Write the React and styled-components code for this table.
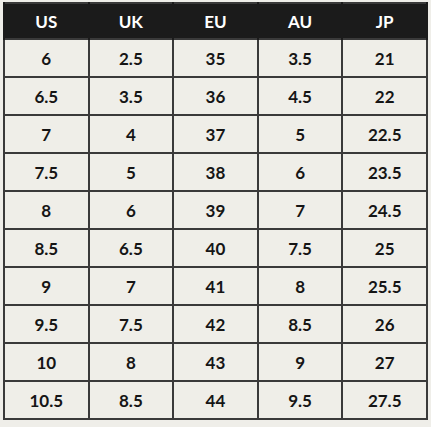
import React from "react";
import styled, { createGlobalStyle } from "styled-components";

const GlobalStyle = createGlobalStyle`
    html, body {
        margin: 0;
        padding: 0;
        background: #efeee9;
    }
    body {
        font-family: Lato, "Open Sans", sans-serif;
    }
`;

const Page = styled.div`
    padding: 2px 3px;
`;

const SizeTable = styled.table`
    width: 425px;
    table-layout: fixed;
    border-collapse: collapse;
    border: 2px solid #3a3a3a;
    background: #efeee8;
`;

const HeadCell = styled.th`
    height: 34px;
    padding: 0;
    background: #1b1b1b;
    color: #ffffff;
    font-size: 17px;
    font-weight: 700;
    text-align: center;
    border-left: 2px solid #1b1b1b;
    border-right: 2px solid #1b1b1b;
`;

const Cell = styled.td`
    height: 36px;
    padding: 0;
    color: #151515;
    font-size: 17px;
    font-weight: 700;
    text-align: center;
    border: 2px solid #3a3a3a;
`;

const columns = ["US", "UK", "EU", "AU", "JP"];

const sizes = [
    ["6", "2.5", "35", "3.5", "21"],
    ["6.5", "3.5", "36", "4.5", "22"],
    ["7", "4", "37", "5", "22.5"],
    ["7.5", "5", "38", "6", "23.5"],
    ["8", "6", "39", "7", "24.5"],
    ["8.5", "6.5", "40", "7.5", "25"],
    ["9", "7", "41", "8", "25.5"],
    ["9.5", "7.5", "42", "8.5", "26"],
    ["10", "8", "43", "9", "27"],
    ["10.5", "8.5", "44", "9.5", "27.5"],
];

export default function App() {
    return (
        <Page>
            <GlobalStyle />
            <SizeTable>
                <thead>
                    <tr>
                        {columns.map((c) => (
                            <HeadCell key={c}>{c}</HeadCell>
                        ))}
                    </tr>
                </thead>
                <tbody>
                    {sizes.map((row, i) => (
                        <tr key={i}>
                            {row.map((v, j) => (
                                <Cell key={j}>{v}</Cell>
                            ))}
                        </tr>
                    ))}
                </tbody>
            </SizeTable>
        </Page>
    );
}
